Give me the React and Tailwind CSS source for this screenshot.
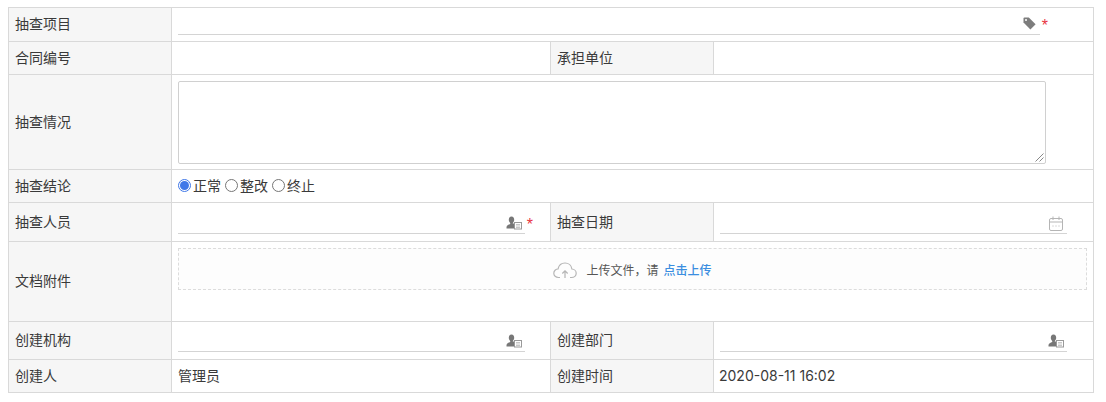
const font = { fontFamily: 'Inter, "Noto Sans CJK SC", sans-serif' };

function Label({ children }) {
  return (
    <td className="border border-[#d9d9d9] bg-[#f6f6f6] px-[6px] pb-[2px] align-middle text-[14px] text-[#3a3a3a]">
      {children}
    </td>
  );
}

function Cell({ children, colSpan, className = "" }) {
  return (
    <td colSpan={colSpan} className={`border border-[#d9d9d9] bg-white pr-[6px] align-middle text-[14px] text-[#3a3a3a] ${className}`}>
      {children}
    </td>
  );
}

function Tag() {
  return (
    <svg width="13" height="13" viewBox="0 0 13 13" className="block">
      <path d="M0.5 1.5 Q0.5 0.5 1.5 0.5 L5.8 0.5 L12.6 7.3 L7.4 12.5 L0.5 5.6 Z" fill="#7d7d7d" />
      <circle cx="3" cy="3" r="1" fill="#fff" />
    </svg>
  );
}

function Person() {
  return (
    <svg width="16" height="14" viewBox="0 0 16 14" className="block">
      <path d="M5.5 0.5 C3.6 0.5 2.8 2 2.8 3.8 C2.8 5.2 3.4 6.2 4.2 6.9 L4.2 8 C2.6 8.8 0.5 9.3 0.5 11.2 L0.5 12.5 L8 12.5 L8 7.5 L6.8 7.5 L6.8 6.9 C7.6 6.2 8.2 5.2 8.2 3.8 C8.2 2 7.4 0.5 5.5 0.5 Z" fill="#777" />
      <rect x="8.5" y="6.5" width="7" height="6.5" fill="#fff" stroke="#9a9a9a" strokeWidth="1" />
      <path d="M10 8.5 H14 M10 10 H14 M10 11.5 H14" stroke="#b0b0b0" strokeWidth="0.7" />
    </svg>
  );
}

function Calendar() {
  return (
    <svg width="14" height="15" viewBox="0 0 14 15" className="block" fill="none" stroke="#b5b5b5" strokeWidth="1">
      <rect x="0.5" y="2.5" width="13" height="12" rx="1.5" />
      <path d="M0.5 6 H13.5 M4 0.5 V4 M10 0.5 V4" />
      <path d="M3.5 10 H4.5 M6.5 10 H7.5 M9.5 10 H10.5" />
    </svg>
  );
}

function Underline({ icon, star, width, right = "right-[3px]" }) {
  return (
    <div className={`relative h-[27px] border-b border-[#d4d4d4] ${width}`}>
      <div className={`absolute top-[9px] flex items-center ${right}`}>{icon}</div>
      {star && <span className="absolute right-[-8px] top-[10px] text-[16px] leading-[16px] text-[#e8343f]" style={{ fontFamily: '"Liberation Sans", sans-serif' }}>*</span>}
    </div>
  );
}

function Radio({ checked, label }) {
  return (
    <label className="flex items-center">
      <span className={`mr-[2px] flex h-[13px] w-[13px] items-center justify-center rounded-full border ${checked ? "border-[#3f77e8]" : "border-[#767676]"} bg-white`}>
        {checked && <span className="h-[9px] w-[9px] rounded-full bg-[#3f77e8]" />}
      </span>
      {label}
    </label>
  );
}

export default function App() {
  return (
    <div className="bg-white pl-[8px] pt-[7px] h-[402px] w-[1106px]" style={font}>
      <table className="w-[1085px] table-fixed border-collapse">
        <colgroup>
          <col className="w-[163px]" />
          <col className="w-[379px]" />
          <col className="w-[163px]" />
          <col className="w-[380px]" />
        </colgroup>
        <tbody>
          <tr className="h-[34px]">
            <Label>抽查项目</Label>
            <Cell colSpan={3} className="pl-[6px] pb-[6px]">
              <Underline icon={<Tag />} star width="w-[862px]" right="right-[4px]" />
            </Cell>
          </tr>
          <tr className="h-[33px]">
            <Label>合同编号</Label>
            <Cell />
            <Label>承担单位</Label>
            <Cell />
          </tr>
          <tr className="h-[95px]">
            <Label>抽查情况</Label>
            <Cell colSpan={3} className="pl-[6px] py-0">
              <div className="relative h-[83px] w-[868px] rounded-[2px] border border-[#d0d0d0]">
                <svg width="9" height="9" viewBox="0 0 9 9" className="absolute bottom-[1px] right-[1px]">
                  <path d="M0.5 8.5 L8.5 0.5 M4.5 8.5 L8.5 4.5" stroke="#888" strokeWidth="1" />
                </svg>
              </div>
            </Cell>
          </tr>
          <tr className="h-[33px]">
            <Label>抽查结论</Label>
            <Cell colSpan={3} className="pl-[6px]">
              <div className="flex gap-[4px] pb-[1px]">
                <Radio checked label="正常" />
                <Radio label="整改" />
                <Radio label="终止" />
              </div>
            </Cell>
          </tr>
          <tr className="h-[39px]">
            <Label>抽查人员</Label>
            <Cell className="pl-[6px] pb-[4px]">
              <Underline icon={<Person />} star width="w-[347px]" />
            </Cell>
            <Label>抽查日期</Label>
            <Cell className="pl-[6px] pb-[4px]">
              <Underline icon={<Calendar />} width="w-[347px]" right="right-[4px]" />
            </Cell>
          </tr>
          <tr className="h-[80px]">
            <Label>文档附件</Label>
            <Cell colSpan={3} className="pl-[6px] pb-[31px] pt-[6px] pr-[4px]">
              <div className="flex h-[42px] items-center justify-center border border-dashed border-[#dcdcdc] bg-[#fdfdfd] pt-[3px] text-[12px] text-[#555]">
                <svg width="24" height="17" viewBox="0 0 24 17" fill="none" className="mr-[10px]" stroke="#b5b5b5" strokeWidth="1.2">
                  <path d="M7 15.5 H5.5 C2.8 15.5 0.8 13.6 0.8 11.2 C0.8 8.8 2.8 7 5 7 C5.8 3.4 8.6 1 12 1 C15.6 1 18.4 3.6 18.9 7 C21.3 7.1 23.2 9 23.2 11.2 C23.2 13.6 21.2 15.5 18.5 15.5 H17" />
                  <path d="M12 16 V9 M9.3 11.5 L12 8.8 L14.7 11.5" />
                </svg>
                <span>上传文件，请</span>
                <span className="ml-[5px] mr-[1px] font-medium text-[#3b8ee0]">点击上传</span>
              </div>
            </Cell>
          </tr>
          <tr className="h-[38px]">
            <Label>创建机构</Label>
            <Cell className="pl-[6px] pb-[4px]">
              <Underline icon={<Person />} width="w-[347px]" />
            </Cell>
            <Label>创建部门</Label>
            <Cell className="pl-[6px] pb-[4px]">
              <Underline icon={<Person />} width="w-[347px]" />
            </Cell>
          </tr>
          <tr className="h-[33px]">
            <Label>创建人</Label>
            <Cell className="pl-[6px] pb-[2px]">管理员</Cell>
            <Label>创建时间</Label>
            <Cell className="pl-[5px] pb-[2px]">2020-08-11 16:02</Cell>
          </tr>
        </tbody>
      </table>
    </div>
  );
}
